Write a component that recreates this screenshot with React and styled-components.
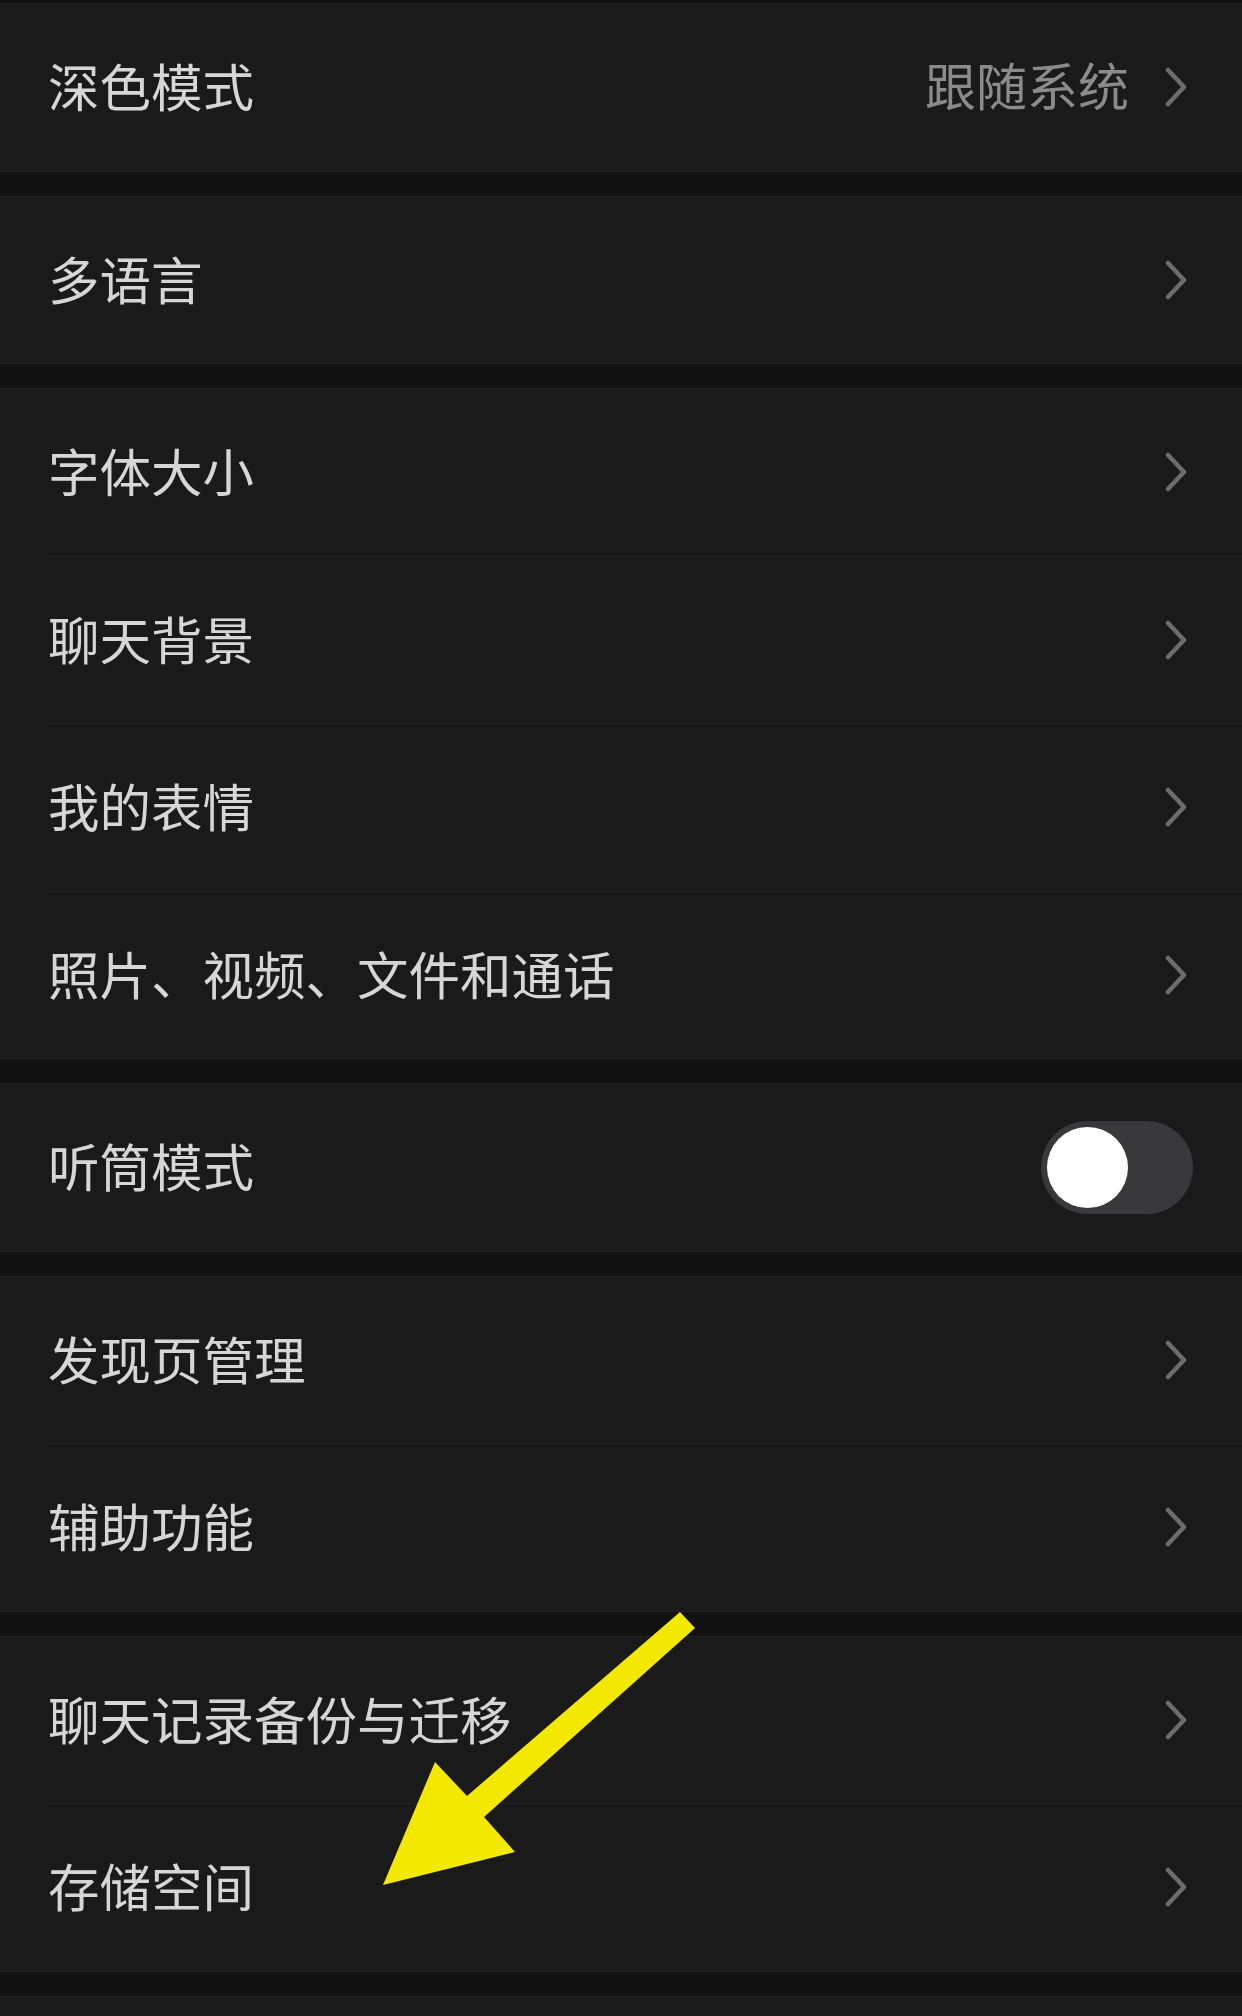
import React from "react"
import styled, { createGlobalStyle } from "styled-components"

const groups = [
  [{ label: "深色模式", value: "跟随系统" }],
  [{ label: "多语言" }],
  [
    { label: "字体大小" },
    { label: "聊天背景" },
    { label: "我的表情" },
    { label: "照片、视频、文件和通话" },
  ],
  [{ label: "听筒模式", toggle: true }],
  [{ label: "发现页管理" }, { label: "辅助功能" }],
  [{ label: "聊天记录备份与迁移" }, { label: "存储空间" }],
  [{ label: "" }],
]

function App() {
  return (
    <Page>
      <GlobalStyle />
      {groups.map((rows, i) => (
        <Group key={i}>
          {rows.map((row, j) => (
            <Row key={j} divided={j > 0}>
              <Label>{row.label}</Label>
              {row.label && (
                <Trailing>
                  {row.value && <Value>{row.value}</Value>}
                  {row.toggle ? (
                    <Toggle>
                      <Knob />
                    </Toggle>
                  ) : (
                    <Chevron />
                  )}
                </Trailing>
              )}
            </Row>
          ))}
        </Group>
      ))}
      <Arrow />
    </Page>
  )
}

export default App

function Chevron() {
  return (
    <ChevronSvg viewBox="0 0 22 40" width="22" height="40">
      <polyline
        points="3,3 19,20 3,37"
        fill="none"
        stroke="#6d6d6d"
        strokeWidth="4.5"
        strokeLinecap="round"
        strokeLinejoin="round"
      />
    </ChevronSvg>
  )
}

function Arrow() {
  // pointer drawn over the list, coordinates in page pixels
  return (
    <ArrowSvg viewBox="370 1600 340 300" width="340" height="300">
      <polygon
        points="680,1612 695,1628 484,1817 515,1852 383,1885 435,1762 467,1796"
        fill="#f3e800"
      />
    </ArrowSvg>
  )
}

const GlobalStyle = createGlobalStyle`
  html, body {
    margin: 0;
    padding: 0;
    background: #111111;
  }
  body {
    font-family: "Noto Sans CJK SC", "Noto Sans", sans-serif;
  }
`

const Page = styled("div")`
  position: relative;
  width: 1242px;
  height: 2016px;
  overflow: hidden;
  background: #111111;
  padding-top: 3px;
  box-sizing: border-box;
`

const Group = styled("section")`
  background: #1a1a1a;
  border-top: 1px solid #232323;
  border-bottom: 1px solid #232323;
  margin-bottom: 24px;
`

const Row = styled("div")`
  position: relative;
  height: ${({ divided }) => (divided ? "167.5px" : "166.5px")};
  display: flex;
  align-items: center;
  justify-content: space-between;
  padding: 0 49px 0 48px;
  box-sizing: border-box;
  border-top: ${({ divided }) => (divided ? "1px solid transparent" : "none")};
  &::before {
    content: "";
    display: ${({ divided }) => (divided ? "block" : "none")};
    position: absolute;
    top: -1px;
    left: 48px;
    right: 0;
    height: 1px;
    background: #262626;
  }
`

const Label = styled("span")`
  font-size: 51.5px;
  line-height: 1;
  margin-top: -5px;
  color: #d6d6d6;
`

const Trailing = styled("div")`
  display: flex;
  align-items: center;
  gap: 36px;
`

const Value = styled("span")`
  font-size: 51px;
  line-height: 1;
  margin-top: -5px;
  color: #8b8b8b;
`

const ChevronSvg = styled("svg")`
  display: block;
  margin-right: 6px;
`

const Toggle = styled("div")`
  width: 152px;
  height: 93px;
  border-radius: 47px;
  background: #39393c;
  display: flex;
  align-items: center;
  padding: 0 6px;
  box-sizing: border-box;
`

const Knob = styled("div")`
  width: 81px;
  height: 81px;
  border-radius: 50%;
  background: #ffffff;
`

const ArrowSvg = styled("svg")`
  position: absolute;
  left: 370px;
  top: 1600px;
  pointer-events: none;
`
